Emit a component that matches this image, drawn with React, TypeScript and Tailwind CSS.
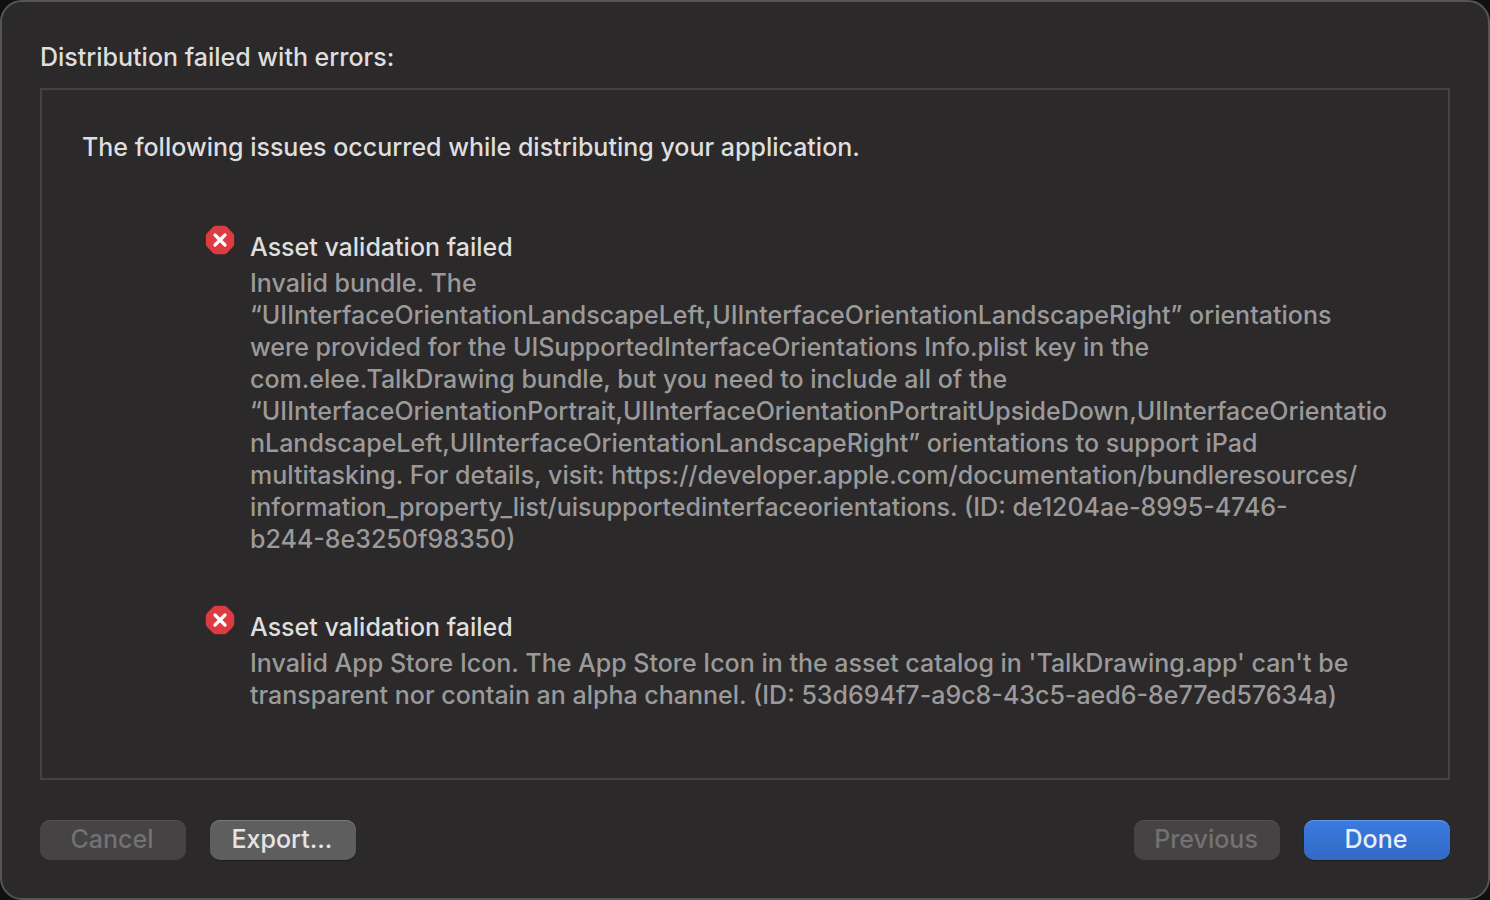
const issues = [
  {
    title: 'Asset validation failed',
    lines: [
      'Invalid bundle. The',
      '“UIInterfaceOrientationLandscapeLeft,UIInterfaceOrientationLandscapeRight” orientations',
      'were provided for the UISupportedInterfaceOrientations Info.plist key in the',
      'com.elee.TalkDrawing bundle, but you need to include all of the',
      '“UIInterfaceOrientationPortrait,UIInterfaceOrientationPortraitUpsideDown,UIInterfaceOrientatio',
      'nLandscapeLeft,UIInterfaceOrientationLandscapeRight” orientations to support iPad',
      'multitasking. For details, visit: https://developer.apple.com/documentation/bundleresources/',
      'information_property_list/uisupportedinterfaceorientations. (ID: de1204ae-8995-4746-',
      'b244-8e3250f98350)',
    ],
  },
  {
    title: 'Asset validation failed',
    lines: [
      "Invalid App Store Icon. The App Store Icon in the asset catalog in 'TalkDrawing.app' can't be",
      'transparent nor contain an alpha channel. (ID: 53d694f7-a9c8-43c5-aed6-8e77ed57634a)',
    ],
  },
];

function ErrorIcon() {
  return (
    <svg viewBox="0 0 30 30" className="size-[30px] shrink-0" aria-hidden="true">
      <path
        d="M11.200 0.800h7.600q1.900 0 3.200 1.300l5.900 5.900q1.300 1.300 1.300 3.200v7.600q0 1.900-1.300 3.200l-5.900 5.900q-1.300 1.300-3.200 1.300h-7.600q-1.900 0-3.200-1.300l-5.900-5.900q-1.300-1.300-1.300-3.200v-7.600q0-1.900 1.300-3.200l5.900-5.900q1.300-1.300 3.200-1.300z"
        fill="#dd3a41"
      />
      <path d="M10 10l10 10M20 10l-10 10" stroke="#fff" strokeWidth="3.200" strokeLinecap="round" />
    </svg>
  );
}

const button = 'h-10 w-[146px] rounded-[10px] pb-[2px] pr-[2px] font-medium';
const disabledButton = 'bg-[#454344] text-[#737172] shadow-[inset_0_1px_0_#525051]';

export default function App() {
  return (
    <div className="min-h-screen bg-[#111011] font-['Inter',sans-serif] text-[25px] leading-8 font-medium">
      <main className="flex min-h-screen flex-col rounded-[22px] border-2 border-[#565556] bg-[#2b292a] px-[38px] pt-[39px] pb-[38px] text-[#dfdedf]">
        <h1>Distribution failed with errors:</h1>
        <section className="mt-[15px] flex-1 border-2 border-[#434142] px-10 pt-[41px] pb-[66px]">
          <p>The following issues occurred while distributing your application.</p>
          <ul className="mt-[62px] flex flex-col gap-[50px] pl-[123px]">
            {issues.map((issue) => (
              <li key={issue.lines[0]} className="flex items-start gap-[15px]">
                <ErrorIcon />
                <div className="min-w-0 flex-1 pt-[6px]">
                  <h2>{issue.title}</h2>
                  <p className="mt-1 break-words text-[#9b9a9a]">
                    {issue.lines.map((line) => (
                      <span key={line} className="block">{line}</span>
                    ))}
                  </p>
                </div>
              </li>
            ))}
          </ul>
        </section>
        <footer className="mt-10 flex justify-between">
          <div className="flex gap-6">
            <button type="button" disabled className={`${button} ${disabledButton}`}>Cancel</button>
            <button type="button" className={`${button} bg-[#5f5e5f] text-[#e6e5e6] shadow-[inset_0_1px_0_#7b7a7b,0_1px_1px_#1d1c1d]`}>Export...</button>
          </div>
          <div className="flex gap-6">
            <button type="button" disabled className={`${button} ${disabledButton}`}>Previous</button>
            <button type="button" className={`${button} bg-linear-to-b from-[#3b7ae2] to-[#326ac4] text-[#e8effb] shadow-[inset_0_1px_0_#6296e8,0_1px_1px_#1d1c1d]`}>Done</button>
          </div>
        </footer>
      </main>
    </div>
  );
}
